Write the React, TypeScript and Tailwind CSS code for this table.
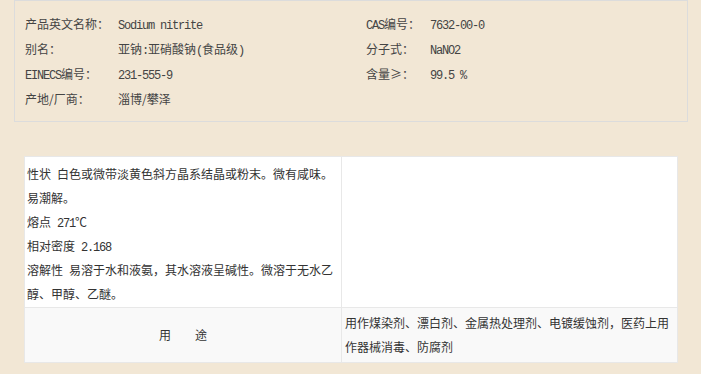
const cjk = "font-['Noto_Sans_CJK_SC','Noto_Sans',sans-serif]";

// half-width latin in the SimSun style: 6px advance at 12px
function Latin({ children }: { children: React.ReactNode }) {
  return (
    <span className="font-['Liberation_Mono',monospace] tracking-[-1.2px] leading-none whitespace-pre">
      {children}
    </span>
  );
}

const leftRows: [React.ReactNode, React.ReactNode][] = [
  ["产品英文名称：", <Latin>Sodium nitrite</Latin>],
  ["别名：", <>亚钠<Latin>:</Latin>亚硝酸钠<Latin>(</Latin>食品级<Latin>)</Latin></>],
  [<><Latin>EINECS</Latin>编号：</>, <Latin>231-555-9</Latin>],
  ["产地/厂商：", "淄博/攀泽"],
];

const rightRows: [React.ReactNode, React.ReactNode][] = [
  [<><Latin>CAS</Latin>编号：</>, <Latin>7632-00-0</Latin>],
  ["分子式：", <Latin>NaNO2</Latin>],
  ["含量≥：", <Latin>99.5 %</Latin>],
];

export default function App() {
  return (
    <div className={`w-[701px] h-[374px] overflow-hidden bg-[#f2e7d5] text-[12px] ${cjk}`}>
      {/* basic info panel */}
      <div className="ml-[14px] w-[674px] h-[122px] border border-[#dcdcdc] px-[10px] py-[10px] flex text-[#444]">
        <div className="w-[341px]">
          {leftRows.map(([k, v], i) => (
            <div key={i} className="flex h-[25px] items-center">
              <div className="w-[93px]">{k}</div>
              <div>{v}</div>
            </div>
          ))}
        </div>
        <div className="flex-1">
          {rightRows.map(([k, v], i) => (
            <div key={i} className="flex h-[25px] items-center">
              <div className="w-[64px]">{k}</div>
              <div>{v}</div>
            </div>
          ))}
        </div>
      </div>

      {/* properties table */}
      <div className="mt-[34px] ml-[24px] w-[654px] border border-[#e8e8e8] text-[#333] leading-[24px]">
        <div className="flex bg-white">
          <div className="w-[317px] border-r border-[#e8e8e8] pt-[5px] pb-[1px] pl-[2px] pr-[4px]">
            <div>{"性状\u2002白色或微带淡黄色斜方晶系结晶或粉末。微有咸味。易潮解。"}</div>
            <div>{"熔点\u2002"}<Latin>271</Latin>℃</div>
            <div>{"相对密度\u2002"}<Latin>2.168</Latin></div>
            <div>{"溶解性\u2002易溶于水和液氨，其水溶液呈碱性。微溶于无水乙醇、甲醇、乙醚。"}</div>
          </div>
          <div className="flex-1" />
        </div>
        <div className="flex bg-[#f9f9f9] border-t border-[#e8e8e8]">
          <div className="w-[317px] border-r border-[#e8e8e8] flex items-center justify-center">
            用　　途
          </div>
          <div className="flex-1 pt-[3px] pb-[3px] pl-[3px] pr-[3px]">
            用作煤染剂、漂白剂、金属热处理剂、电镀缓蚀剂，医药上用作器械消毒、防腐剂
          </div>
        </div>
      </div>
    </div>
  );
}
